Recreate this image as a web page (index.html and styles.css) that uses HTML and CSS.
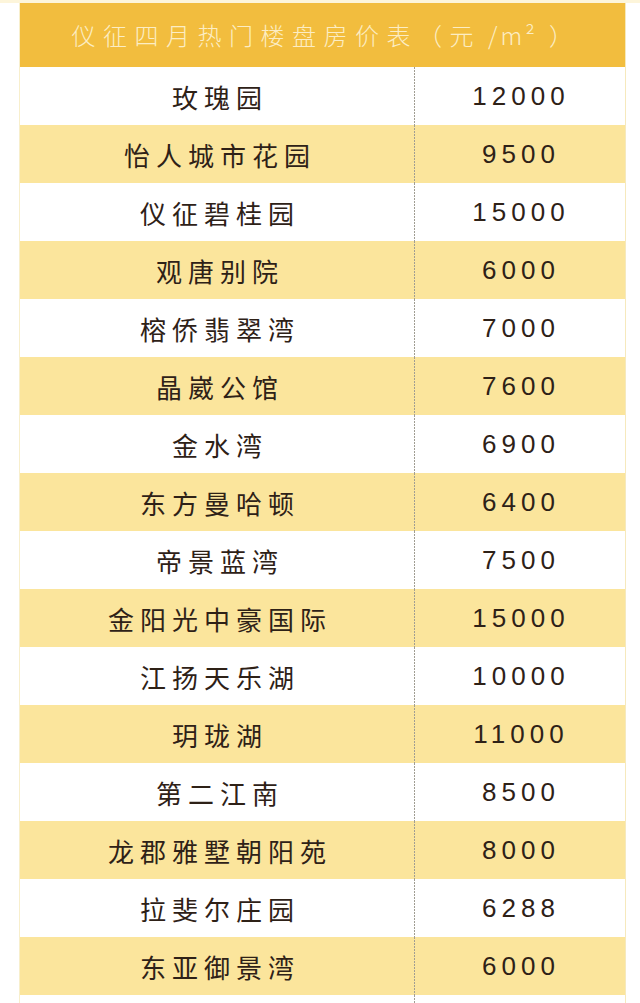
FILE: index.html
```html
<!DOCTYPE html>
<html lang="zh-CN">
<head>
<meta charset="utf-8">
<title>仪征四月热门楼盘房价表</title>
<link rel="stylesheet" href="styles.css">
</head>
<body>
<div class="page">
  <div class="table">
    <div class="head">仪征四月热门楼盘房价表（元<span class="unit">/m²</span>）</div>
    <div class="body">
      <div class="row"><div class="name">玫瑰园</div><div class="price">12000</div></div>
      <div class="row alt"><div class="name">怡人城市花园</div><div class="price">9500</div></div>
      <div class="row"><div class="name">仪征碧桂园</div><div class="price">15000</div></div>
      <div class="row alt"><div class="name">观唐别院</div><div class="price">6000</div></div>
      <div class="row"><div class="name">榕侨翡翠湾</div><div class="price">7000</div></div>
      <div class="row alt"><div class="name">晶崴公馆</div><div class="price">7600</div></div>
      <div class="row"><div class="name">金水湾</div><div class="price">6900</div></div>
      <div class="row alt"><div class="name">东方曼哈顿</div><div class="price">6400</div></div>
      <div class="row"><div class="name">帝景蓝湾</div><div class="price">7500</div></div>
      <div class="row alt"><div class="name">金阳光中豪国际</div><div class="price">15000</div></div>
      <div class="row"><div class="name">江扬天乐湖</div><div class="price">10000</div></div>
      <div class="row alt"><div class="name">玥珑湖</div><div class="price">11000</div></div>
      <div class="row"><div class="name">第二江南</div><div class="price">8500</div></div>
      <div class="row alt"><div class="name">龙郡雅墅朝阳苑</div><div class="price">8000</div></div>
      <div class="row"><div class="name">拉斐尔庄园</div><div class="price">6288</div></div>
      <div class="row alt"><div class="name">东亚御景湾</div><div class="price">6000</div></div>
      <div class="row"><div class="name"></div><div class="price"></div></div>
    </div>
  </div>
</div>
</body>
</html>
```

FILE: styles.css
```css
html, body {
  margin: 0;
  padding: 0;
  height: 1003px;
  overflow: hidden;
  background: #ffffff;
}

.page {
  padding: 3px 14px 0 20px;
  background: linear-gradient(#fdf5da 0, #fdf5da 3px, #ffffff 3px);
}

.table {
  width: 605px;
  border-right: 1px solid #f6e9bd;
  border-left: 1px solid #f8efcc;
  margin-left: -1px;
}

.head {
  height: 64px;
  background: #f2bd3e;
  color: #fcedc4;
  font-family: "Noto Sans CJK SC", "Noto Sans", sans-serif;
  font-weight: 300;
  font-size: 24px;
  letter-spacing: 7.5px;
  text-indent: 7px;
  display: flex;
  align-items: center;
  justify-content: center;
  padding-bottom: 2px;
  box-sizing: border-box;
}

.unit {
  letter-spacing: 3px;
  margin-right: 4px;
}

.body {
  display: flex;
  flex-direction: column;
}

.row {
  height: 58px;
  display: grid;
  grid-template-columns: 394px 1px 210px;
  background: #ffffff;
  color: #2e2117;
}

.row::before {
  content: "";
  grid-column: 2;
  grid-row: 1;
  background: repeating-linear-gradient(to bottom, #a09d92 0, #a09d92 2px, transparent 2px, transparent 3px);
}

.row.alt {
  background: #fbe59c;
}

.name {
  grid-column: 1;
  grid-row: 1;
  display: flex;
  align-items: center;
  justify-content: center;
  font-family: "Noto Sans CJK SC", "Noto Sans", sans-serif;
  font-weight: 400;
  font-size: 26px;
  letter-spacing: 6px;
  text-indent: 6px;
}

.price {
  grid-column: 3;
  grid-row: 1;
  display: flex;
  align-items: center;
  justify-content: center;
  font-family: "Liberation Sans", Arial, sans-serif;
  font-size: 26px;
  letter-spacing: 5px;
  text-indent: 2px;
}
```
